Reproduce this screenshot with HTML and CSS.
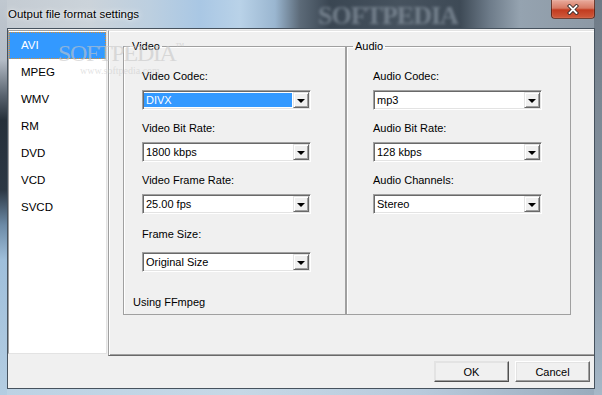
FILE: index.html
```html
<!DOCTYPE html>
<html lang="en">
<head>
    <meta charset="UTF-8">
    <meta name="viewport" content="width=device-width, initial-scale=1.0">
    <title>Output file format settings</title>
    <link rel="stylesheet" href="styles.css">
</head>
<body>
    <div class="window">
        <div class="titlebar">
            <span class="title">Output file format settings</span>
            <span class="glass-mark">SOFTPEDIA</span>
            <button class="close" title="Close">
                <svg width="12" height="11" viewBox="0 0 12 11">
                    <path d="M2.5 2 L9.5 9 M9.5 2 L2.5 9" stroke="#3a2a28" stroke-width="3.6" stroke-linecap="square" fill="none"/>
                    <path d="M2.5 2 L9.5 9 M9.5 2 L2.5 9" stroke="#ffffff" stroke-width="1.8" stroke-linecap="square" fill="none"/>
                </svg>
            </button>
        </div>
        <div class="client">
            <div class="main">
                <ul class="formats">
                    <li class="selected">AVI</li>
                    <li>MPEG</li>
                    <li>WMV</li>
                    <li>RM</li>
                    <li>DVD</li>
                    <li>VCD</li>
                    <li>SVCD</li>
                </ul>
                <div class="page">
                    <fieldset class="group video">
                        <legend>Video</legend>
                        <div class="fields">
                            <div class="label">Video Codec:</div>
                            <div class="combo"><span class="value focused">DIVX</span><span class="drop"></span></div>
                            <div class="label">Video Bit Rate:</div>
                            <div class="combo"><span class="value">1800 kbps</span><span class="drop"></span></div>
                            <div class="label">Video Frame Rate:</div>
                            <div class="combo"><span class="value">25.00 fps</span><span class="drop"></span></div>
                            <div class="label wide">Frame Size:</div>
                            <div class="combo"><span class="value">Original Size</span><span class="drop"></span></div>
                        </div>
                        <div class="note">Using FFmpeg</div>
                    </fieldset>
                    <fieldset class="group audio">
                        <legend>Audio</legend>
                        <div class="fields">
                            <div class="label">Audio Codec:</div>
                            <div class="combo"><span class="value">mp3</span><span class="drop"></span></div>
                            <div class="label">Audio Bit Rate:</div>
                            <div class="combo"><span class="value">128 kbps</span><span class="drop"></span></div>
                            <div class="label">Audio Channels:</div>
                            <div class="combo"><span class="value">Stereo</span><span class="drop"></span></div>
                        </div>
                    </fieldset>
                </div>
            </div>
            <div class="buttons">
                <button class="btn default">OK</button>
                <button class="btn">Cancel</button>
            </div>
            <div class="watermark">SOFTPEDIA<span class="tm">™</span><span class="url">www.softpedia.com</span></div>
        </div>
    </div>
</body>
</html>
```

FILE: styles.css
```css
* {
    box-sizing: border-box;
}
body {
    margin: 0;
    width: 602px;
    height: 395px;
    overflow: hidden;
    font-family: "Liberation Sans", Arial, sans-serif;
    font-size: 11px;
    color: #000;
    background:
        linear-gradient(180deg, #c0c8d0 0, #b4bcc6 60px, #5a6470 95px, #26303a 120px, #2c3844 190px, #6c8aa6 225px, #9fbfdb 260px, #b4cde2 395px) left top / 7px 395px no-repeat,
        linear-gradient(180deg, #6e7a86 0, #7c8894 100px, #8896a4 250px, #a6b8c8 395px) right top / 8px 395px no-repeat,
        linear-gradient(90deg, #bcd2e4 0, #c6d8e6 40%, #b8cadc 70%, #98aabb 100%) left bottom / 100% 7px no-repeat,
        linear-gradient(90deg, #c4cbd2 0, #cbd3da 90px, #bccfe0 150px, #a9c7e4 200px, #b9d2e8 240px, #9ab6d0 275px, #5c6a78 300px, #3a4652 330px, #46525e 400px, #3e4a56 460px, #6e7c8a 490px, #95a3b0 520px, #8c98a4 602px);
}
.window {
    width: 602px;
    height: 395px;
}
.titlebar {
    position: relative;
    display: flex;
    align-items: center;
    height: 28px;
    padding-left: 8px;
}
.title {
    font-size: 11.5px;
    text-shadow: 0 0 6px rgba(255,255,255,0.9), 0 0 2px rgba(255,255,255,0.8);
}
.glass-mark {
    position: absolute;
    left: 318px;
    top: 1px;
    font-family: "Liberation Serif", serif;
    font-weight: bold;
    font-size: 26px;
    letter-spacing: -1px;
    color: rgba(165,178,190,0.5);
    filter: blur(1.4px);
}
.close {
    align-self: flex-start;
    margin-left: auto;
    margin-right: 7px;
    width: 44px;
    height: 19px;
    padding: 0;
    display: flex;
    align-items: center;
    justify-content: center;
    border: 1px solid rgba(70,30,20,0.75);
    border-top: none;
    border-radius: 0 0 4px 4px;
    background: linear-gradient(180deg, #e9ab9c 0, #d77a64 45%, #c23b1f 55%, #cf5a3c 100%);
    box-shadow: inset 0 0 1px rgba(255,255,255,0.7);
}
.client {
    position: relative;
    margin-left: 7px;
    width: 588px;
    height: 361px;
    border: 1px solid #46525e;
    background: #f0f0f0;
}
.main {
    display: flex;
    align-items: flex-start;
    padding-top: 1px;
}
.formats {
    list-style: none;
    margin: 0;
    padding: 1px 0 0 0;
    width: 99px;
    height: 324px;
    background: #fff;
    border: 1px solid;
    border-color: #a0a0a0 #e3e3e3 #e3e3e3 #a0a0a0;
}
.formats li {
    height: 27px;
    line-height: 27px;
    padding-left: 12px;
    font-size: 11.5px;
}
.formats li.selected {
    background: #3399ff;
    color: #fff;
    outline: 1px dotted #e0902c;
    outline-offset: -1px;
}
.page {
    flex: 1;
    display: flex;
    align-items: flex-start;
    margin-left: 1px;
    height: 326px;
    padding: 9px 0 0 14px;
    border-left: 1px solid #a0a0a0;
    border-top: 1px solid #e3e3e3;
    border-bottom: 1px solid #696969;
    box-shadow: inset 1px 1px #fff, inset 0 -1px #a0a0a0;
}
.group {
    margin: 0;
    min-width: 0;
    height: 275px;
    padding: 17px 0 0 0;
    border: 1px solid #a0a0a0;
    box-shadow: inset 1px 1px #fff;
}
.group.video {
    width: 223px;
}
.group.audio {
    width: 225px;
}
.group legend {
    margin-left: 6px;
    padding: 0 2px;
    line-height: 13px;
}
.video .fields {
    padding-left: 18px;
}
.audio .fields {
    padding-left: 26px;
}
.label {
    line-height: 13px;
    margin-bottom: 7px;
}
.label.wide {
    margin-top: 14px;
    margin-bottom: 11px;
}
.combo {
    display: flex;
    width: 169px;
    height: 20px;
    margin-bottom: 12px;
    background: #fff;
    border: 1px solid;
    border-color: #a0a0a0 #ffffff #ffffff #a0a0a0;
    box-shadow: inset 1px 1px #696969, inset -1px -1px #e3e3e3;
    padding: 1px;
}
.value {
    flex: 1;
    margin: 1px 1px 1px 0;
    padding-left: 2px;
    line-height: 14px;
    white-space: nowrap;
}
.value.focused {
    background: #3399ff;
    color: #fff;
}
.drop {
    position: relative;
    width: 16px;
    height: 16px;
    background: #f0f0f0;
    border: 1px solid;
    border-color: #e3e3e3 #696969 #696969 #e3e3e3;
    box-shadow: inset 1px 1px #fff, inset -1px -1px #a0a0a0;
}
.drop::after {
    content: "";
    position: absolute;
    left: 3px;
    top: 6px;
    border-left: 4px solid transparent;
    border-right: 4px solid transparent;
    border-top: 4px solid #000;
}
.note {
    margin: 24px 0 0 9px;
    line-height: 13px;
}
.buttons {
    display: flex;
    justify-content: flex-end;
    gap: 6px;
    padding: 5px 4px 0 0;
}
.btn {
    width: 75px;
    height: 21px;
    padding: 0;
    font-family: "Liberation Sans", Arial, sans-serif;
    font-size: 11px;
    color: #000;
    background: #f0f0f0;
    border: 1px solid;
    border-color: #fff #696969 #696969 #fff;
    box-shadow: inset -1px -1px #a0a0a0, inset 1px 1px #e3e3e3;
}
.btn.default {
    border-color: #e3e3e3 #505050 #505050 #e3e3e3;
}
.watermark {
    position: absolute;
    left: 50px;
    top: 5px;
    font-family: "Liberation Serif", serif;
    font-size: 24px;
    line-height: 24px;
    letter-spacing: -1.3px;
    color: rgba(198,198,198,0.6);
    pointer-events: none;
    white-space: nowrap;
}
.watermark .tm {
    font-size: 9px;
    vertical-align: 12px;
}
.watermark .url {
    position: absolute;
    left: 22px;
    top: 25px;
    font-size: 10px;
    letter-spacing: 0;
    color: rgba(198,198,198,0.5);
}
```
